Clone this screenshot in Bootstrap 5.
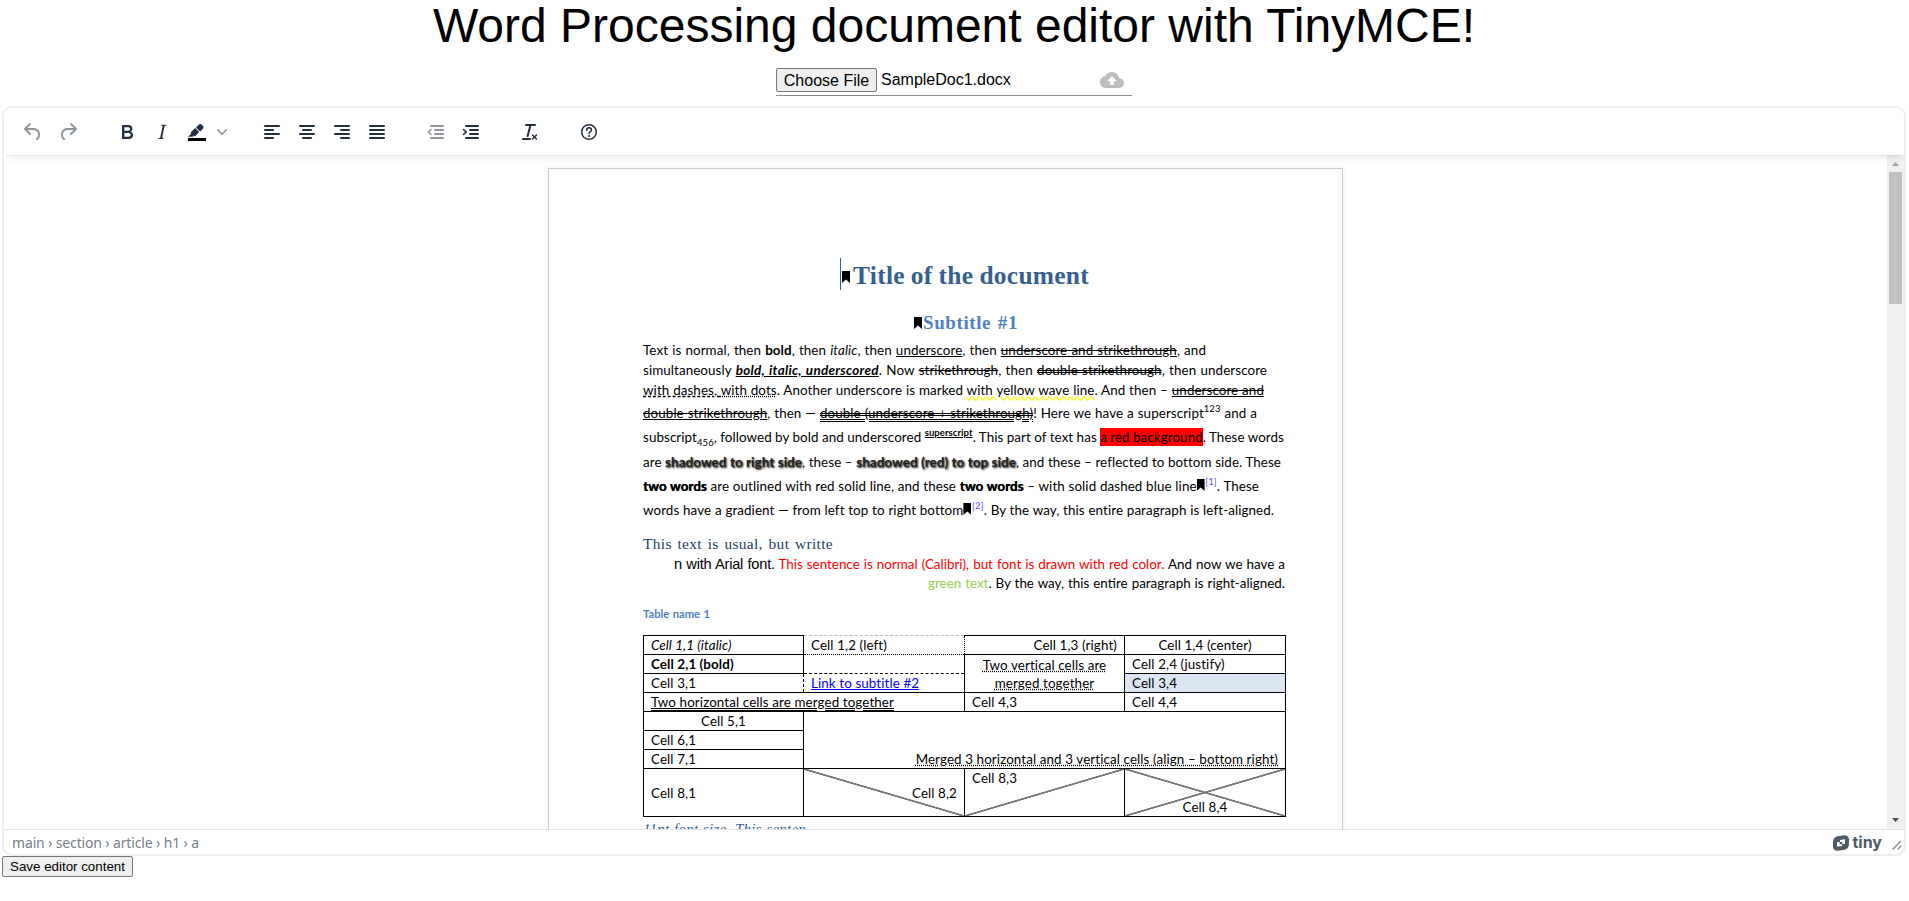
<!DOCTYPE html>
<html lang="en">
<head>
<meta charset="utf-8">
<title>Word Processing document editor with TinyMCE!</title>
<link href="https://cdn.jsdelivr.net/npm/bootstrap@5.3.0/dist/css/bootstrap.min.css" rel="stylesheet">
<style>
body{font-family:"Liberation Sans",Arial,sans-serif;color:#000;background:#fff;height:901px;overflow:hidden;padding:0 3px 0 2px}
.app-title{font-size:48px;line-height:51px;height:64px;color:#000}
.file-row{width:356px;height:32px;border-bottom:1px solid #8c8c8c;font-size:16px}
.ua-btn{border:1px solid #767676;border-radius:2px;background:#efefef;color:#000;white-space:nowrap}
.choose{width:101px;height:24px;line-height:21px;padding:0;text-align:center}
.editor{height:750px;margin-top:10px;border:2px solid #eee;border-radius:10px;overflow:hidden}
.tools{height:47px;padding-left:11px;position:relative;z-index:1;background:#fff;box-shadow:0 2px 2px -2px rgba(34,47,62,.15),0 8px 8px -4px rgba(34,47,62,.08)}
.tools svg,.tools span{flex:none}
.ico{width:24px;height:24px;fill:#222f3e;color:#222f3e}
.off{opacity:.5}
.view{height:674px;overflow:hidden}
.sheet{width:795px;height:800px;margin:13px 0 0 544px;border:1px solid #ccc;box-shadow:0 0 5px rgba(0,0,0,.08);padding:89px 0 0 94px;color:#000;font-family:Lato,sans-serif;font-size:13.4px;letter-spacing:0}
.ln{display:block;white-space:nowrap;text-align:justify;text-align-last:justify;word-spacing:-1.5px}
.para .ln{letter-spacing:.08px;word-spacing:-2px}
.ser{font-family:"Liberation Serif",Cambria,serif;letter-spacing:0}
.h-one{height:32px;margin-left:197px;border-left:1px solid #365f91;padding-left:1px;width:300px;line-height:34px;font-size:25.4px;color:#365f91;font-weight:700}
.h-two{height:24px;margin:20px 0 0 271px;line-height:26px;font-size:19px;color:#4f81bd;font-weight:700}
.bm{display:inline-block;width:8px;height:12px;background:#000;clip-path:polygon(0 0,100% 0,100% 100%,50% 70%,0 100%)}
.u{text-decoration:underline}.s{text-decoration:line-through}.us{text-decoration:underline line-through}
.ds{text-decoration:line-through double}.dot{text-decoration:underline dotted}.dash{text-decoration:underline dashed}
.wave{text-decoration:underline wavy #ff0}
.dus{text-decoration:underline line-through double}
.shade{font-weight:700;color:#222;text-shadow:1px 1px 2px #000}
.heavy{font-weight:700;text-shadow:.4px 0 0 #000}
.sup,.sub{font-size:9.5px;position:relative;top:-6px;line-height:0}.sub{top:4px}
.cells{width:642px;height:182px;border-collapse:collapse;table-layout:fixed;margin-top:12px;line-height:18px;letter-spacing:.1px}
.cells td{border:1px solid #000;padding:0 7px;height:19px;white-space:nowrap;vertical-align:middle}
.cells .tall{height:48px}
.dg{background-repeat:no-repeat;background-size:100% 100%}
.bar{width:17px;background:#f0f0f0}
.thumb{width:13px;height:132px;background:#c1c1c1}
.state{height:25px;border-top:1px solid #e3e3e3;font-family:"Noto Sans",sans-serif;font-size:14px;color:rgba(34,47,62,.65);padding:1px 2px 0 8px}
.crumbs{letter-spacing:-.15px;word-spacing:0}
.brandword{font-family:Inter,sans-serif;font-weight:700;font-size:16px;color:#4e5a66}
.save{width:131px;height:21px;font-size:13.33px;line-height:19px;padding:0}
</style>
</head>
<body>
<h1 class="app-title fw-normal text-center text-nowrap m-0">Word Processing document editor with TinyMCE!</h1>
<div class="file-row mx-auto d-flex align-items-start pt-1">
<button class="ua-btn choose">Choose File</button><span style="margin-left:4px;line-height:24px">SampleDoc1.docx</span>
<svg class="ms-auto me-2" width="24" height="24" viewBox="0 0 24 24" fill="#bdbdbd"><path d="M19.35 10.04A7.49 7.49 0 0 0 12 4C9.11 4 6.6 5.64 5.35 8.04A5.994 5.994 0 0 0 0 14c0 3.31 2.69 6 6 6h13c2.76 0 5-2.24 5-5 0-2.64-2.05-4.78-4.65-4.96zM14 13v4h-4v-4H7l5-5 5 5h-3z"/></svg>
</div>
<div class="editor">
<div class="tools d-flex align-items-center">
<svg class="ico off" style="margin-left:6px" viewBox="0 0 24 24"><path d="M6.4 8H12c3.7 0 6.2 2 6.8 5.1.6 2.7-.4 5.6-2.3 6.8a1 1 0 0 1-1-1.8c1.1-.6 1.8-2.7 1.4-4.6-.5-2.1-2.1-3.5-4.9-3.5H6.4l3.3 3.3a1 1 0 1 1-1.4 1.4l-5-5a1 1 0 0 1 0-1.4l5-5a1 1 0 0 1 1.4 1.4L6.4 8Z"/></svg>
<svg class="ico off" style="margin-left:11px" viewBox="0 0 24 24"><path transform="matrix(-1 0 0 1 24 0)" d="M6.4 8H12c3.7 0 6.2 2 6.8 5.1.6 2.7-.4 5.6-2.3 6.8a1 1 0 0 1-1-1.8c1.1-.6 1.8-2.7 1.4-4.6-.5-2.1-2.1-3.5-4.9-3.5H6.4l3.3 3.3a1 1 0 1 1-1.4 1.4l-5-5a1 1 0 0 1 0-1.4l5-5a1 1 0 0 1 1.4 1.4L6.4 8Z"/></svg>
<svg class="ico" style="margin-left:35px" viewBox="0 0 24 24"><path d="M7.8 19c-.3 0-.5 0-.6-.2l-.2-.5V5.7c0-.2 0-.4.2-.5l.6-.2h5c1.5 0 2.7.3 3.5 1 .7.6 1.1 1.4 1.1 2.5a3 3 0 0 1-.6 1.9c-.4.6-1 1-1.6 1.2.4.1.9.3 1.3.6s.8.7 1 1.2c.4.4.5 1 .5 1.6 0 1.3-.4 2.3-1.3 3-.8.7-2.1 1-3.8 1H7.8Zm5-8.3c.6 0 1.2-.1 1.6-.5.4-.3.6-.7.6-1.3 0-1.1-.8-1.7-2.3-1.7H9.3v3.5h3.4Zm.5 6c.7 0 1.3-.1 1.7-.4.4-.4.6-.9.6-1.5s-.2-1-.7-1.4c-.4-.3-1-.4-2-.4H9.4v3.8h4Z"/></svg>
<svg class="ico" style="margin-left:11px" viewBox="0 0 24 24"><path d="m16.7 4.7-.1.9h-.3c-.6 0-1 0-1.4.3-.3.3-.4.6-.5 1.1l-2.1 9.8v.6c0 .5.4.8 1.4.8h.2l-.2.8H8l.2-.8h.2c1.1 0 1.8-.5 2-1.5l2-9.8.1-.5c0-.6-.4-.8-1.4-.8h-.3l.2-.9h5.8Z"/></svg>
<svg class="ico" style="margin-left:11px" viewBox="0 0 24 24"><path fill="#000" d="M3 18h18v3H3z"/><path d="M7.7 16.7H3l3.3-3.3-.7-.8L10.2 8l4 4.1-4 4.2c-.2.2-.6.2-.8 0l-.6-.7-1.1 1.1zm5-7.5L11 7.4l3-2.9a2 2 0 0 1 2.6 0L18 6c.7.7.7 2 0 2.7l-2.9 2.9-1.8-1.8-.5-.6"/></svg>
<svg style="margin-left:8px;opacity:.5" width="10" height="10" viewBox="0 0 10 10" fill="#222f3e"><path d="M8.7 2.2c.3-.3.8-.3 1 0 .4.4.4.9 0 1.2L5.700 7.800c-.3.3-.9.3-1.200 0L.2 3.400a.8.8 0 0 1 0-1.200c.3-.3.8-.3 1.100 0L5 6l3.700-3.800Z"/></svg>
<svg class="ico" style="margin-left:33px" viewBox="0 0 24 24" stroke="currentColor" stroke-width="2" stroke-linecap="round"><path d="M5 6h14M5 10h8M5 14h14M5 18h8"/></svg>
<svg class="ico" style="margin-left:11px" viewBox="0 0 24 24" stroke="currentColor" stroke-width="2" stroke-linecap="round"><path d="M5 6h14M8 10h8M5 14h14M8 18h8"/></svg>
<svg class="ico" style="margin-left:11px" viewBox="0 0 24 24" stroke="currentColor" stroke-width="2" stroke-linecap="round"><path d="M5 6h14M11 10h8M5 14h14M11 18h8"/></svg>
<svg class="ico" style="margin-left:11px" viewBox="0 0 24 24" stroke="currentColor" stroke-width="2" stroke-linecap="round"><path d="M5 6h14M5 10h14M5 14h14M5 18h14"/></svg>
<svg class="ico off" style="margin-left:35px" viewBox="0 0 24 24" fill="none" stroke="currentColor" stroke-width="2" stroke-linecap="round"><path d="M7 6h12M11 10h8M11 14h8M7 18h12"/><path fill="none" stroke-width="1.6" d="M7 9.600 4.400 12 7 14.400"/></svg>
<svg class="ico" style="margin-left:11px" viewBox="0 0 24 24" stroke="currentColor" stroke-width="2" stroke-linecap="round"><path d="M7 6h12M11 10h8M11 14h8M7 18h12"/><path fill="none" stroke-width="1.6" d="M4.600 9.600 7.200 12l-2.600 2.400"/></svg>
<svg class="ico" style="margin-left:35px" viewBox="0 0 24 24"><path d="M13.2 6a1 1 0 0 1 0 .2l-2.6 10a1 1 0 0 1-1 .8h-.2a.8.8 0 0 1-.8-1l2.6-10H8a1 1 0 1 1 0-2h9a1 1 0 0 1 0 2h-3.8ZM5 18h7a1 1 0 0 1 0 2H5a1 1 0 0 1 0-2Zm13 1.5L16.5 18 15 19.5a.7.7 0 0 1-1-1l1.5-1.5-1.5-1.5a.7.7 0 0 1 1-1l1.5 1.5 1.5-1.5a.7.7 0 0 1 1 1L17.5 17l1.5 1.5a.7.7 0 0 1-1 1Z"/></svg>
<svg class="ico" style="margin-left:35px" viewBox="0 0 24 24"><circle cx="12" cy="12" r="7.3" fill="none" stroke="currentColor" stroke-width="1.5"/><path d="M9.7 10.2c0-1.5 1-2.4 2.4-2.4s2.3.9 2.3 2.1c0 1.700-2.300 1.800-2.300 3.500" fill="none" stroke="currentColor" stroke-width="1.5" stroke-linecap="round"/><circle cx="12.1" cy="15.9" r="1"/></svg>
</div>
<div class="view d-flex">
<div class="flex-grow-1 overflow-hidden">
<div class="sheet">
<div class="h-one ser d-flex"><i class="bm flex-shrink-0" style="margin-top:13px;margin-right:3px"></i><span class="ln" style="width:236px;letter-spacing:.3px">Title of the document</span></div>
<div class="h-two ser d-flex"><i class="bm flex-shrink-0" style="margin-top:7px;margin-right:1px"></i><span class="ln" style="width:95px;letter-spacing:.6px">Subtitle #1</span></div>
<div class="para" style="margin-top:6px">
<span class="ln" style="width:563px;height:20px;line-height:20px">Text is normal, then <b>bold</b>, then <i>italic</i>, then <span class="u">underscore</span>, then <span class="us">underscore and strikethrough</span>, and</span>
<span class="ln" style="width:624px;height:20px;line-height:20px">simultaneously <b class="u fst-italic" style="letter-spacing:.3px">bold, italic, underscored</b>. Now <span class="s">strikethrough</span>, then <span class="ds">double strikethrough</span>, then underscore</span>
<span class="ln" style="width:621px;height:20px;line-height:20px"><span class="dash">with dashes, </span><span class="dot">with dots</span>. Another underscore is marked <span class="wave">with yellow wave line</span>. And then – <span class="us">underscore and</span></span>
<span class="ln" style="width:614px;height:26px;line-height:26px"><span class="us">double strikethrough</span>, then — <span class="dus">double (underscore + strikethrough)</span>! Here we have a superscript<span class="sup">123</span> and a</span>
<span class="ln" style="width:641px;height:23px;line-height:23px">subscript<span class="sub">456</span>, followed by bold and underscored <b class="sup u">superscript</b>. This part of text has <span style="background:red;padding:1px 0">a red background</span>. These words</span>
<span class="ln" style="width:638px;height:26px;line-height:26px">are <span class="shade">shadowed to right side</span>, these – <span class="shade">shadowed (red) to top side</span>, and these – reflected to bottom side. These</span>
<span class="ln" style="width:616px;height:23px;line-height:23px"><span class="heavy">two words</span> are outlined with red solid line, and these <span class="heavy">two words</span> – with solid dashed blue line<i class="bm"></i><span class="sup" style="color:#55f">&#8202;[1]</span>. These</span>
<span class="ln" style="width:631px;height:25px;line-height:25px">words have a gradient — from left top to right bottom<i class="bm"></i><span class="sup" style="color:#55f">&#8202;[2]</span>. By the way, this entire paragraph is left-aligned.</span>
</div>
<span class="ln ser" style="width:190px;margin-top:11px;height:20px;line-height:20px;font-size:15.4px;letter-spacing:.35px;color:#243f60">This text is usual, but writte</span>
<span class="ln" style="width:611px;margin-left:31px;height:20px;line-height:20px"><span style="font:14.67px 'Liberation Sans';letter-spacing:-.25px">n with Arial font.</span> <span style="color:red">This sentence is normal (Calibri), but font is drawn with red color.</span> And now we have a</span>
<span class="ln" style="width:357px;margin-left:285px;height:19px;line-height:19px"><span style="color:#92d050">green text</span>. By the way, this entire paragraph is right-aligned.</span>
<span class="ln fw-bold" style="width:67px;margin-top:12px;line-height:18px;font-size:11.2px;color:#4f81bd">Table name 1</span>
<table class="cells">
<colgroup><col style="width:160px"><col style="width:161px"><col style="width:160px"><col style="width:161px"></colgroup>
<tr><td class="fst-italic">Cell 1,1 (italic)</td><td style="border-top:1px dashed #bbb;border-left:1px dotted #000;border-bottom:1px dotted #000;border-right:1px dotted #000">Cell 1,2 (left)</td><td class="text-end" style="border-left-style:dotted">Cell 1,3 (right)</td><td class="text-center">Cell 1,4 (center)</td></tr>
<tr><td class="fw-bold">Cell 2,1 (bold)</td><td style="border-top:1px dotted #000;border-bottom:1px dashed #000"></td><td rowspan="2" class="text-center dot">Two vertical cells are<br>merged together</td><td>Cell 2,4 (justify)</td></tr>
<tr><td style="border-right:1px dashed #000">Cell 3,1</td><td style="border-top:1px dashed #000;border-left:1px dashed #000"><span class="u" style="color:#00f">Link to subtitle #2</span></td><td style="background:#dbe5f1">Cell 3,4</td></tr>
<tr><td colspan="2"><span style="text-decoration:underline double">Two horizontal cells are merged together</span></td><td>Cell 4,3</td><td>Cell 4,4</td></tr>
<tr><td class="text-center">Cell 5,1</td><td colspan="3" rowspan="3" class="text-end align-bottom"><span class="dot">Merged 3 horizontal and 3 vertical cells (align – bottom right)</span></td></tr>
<tr><td>Cell 6,1</td></tr>
<tr><td>Cell 7,1</td></tr>
<tr><td class="tall">Cell 8,1</td>
<td class="text-end dg" style="background-image:linear-gradient(to top right,transparent calc(50% - 1.2px),#777 calc(50% - .6px),#777 calc(50% + .6px),transparent calc(50% + 1.2px))">Cell 8,2</td>
<td class="align-top dg" style="background-image:linear-gradient(to bottom right,transparent calc(50% - 1.2px),#777 calc(50% - .6px),#777 calc(50% + .6px),transparent calc(50% + 1.2px))">Cell 8,3</td>
<td class="text-center align-bottom dg" style="background-image:linear-gradient(to top right,transparent calc(50% - 1.2px),#777 calc(50% - .6px),#777 calc(50% + .6px),transparent calc(50% + 1.2px)),linear-gradient(to bottom right,transparent calc(50% - 1.2px),#777 calc(50% - .6px),#777 calc(50% + .6px),transparent calc(50% + 1.2px))">Cell 8,4</td></tr>
</table>
<span class="ln ser fst-italic" style="width:163px;margin-top:2px;line-height:20px;font-size:15px;letter-spacing:.2px;color:#365f91">11pt font size. This senten</span>
</div>
</div>
<div class="bar d-flex flex-column align-items-center">
<svg width="17" height="17" viewBox="0 0 17 17"><path fill="#a3a3a3" d="M5 11h7L8.500 7z"/></svg>
<div class="thumb"></div>
<svg class="mt-auto" width="17" height="17" viewBox="0 0 17 17"><path fill="#505050" d="M5 6h7L8.500 10z"/></svg>
</div>
</div>
<div class="state d-flex align-items-center">
<span class="ln crumbs" style="width:184px">main › section › article › h1 › a</span>
<svg class="ms-auto" width="16" height="16" viewBox="0 0 16 16"><path fill="#4e5a66" fill-rule="evenodd" d="M4.500 1.200 11 .2C14 0 16 1.700 16 4.500V9c0 3-1.500 5-4.500 5.700L5 15.800C2 16 0 14.300 0 11.500V7c0-3 1.500-5.200 4.500-5.800ZM12 4.200 7 5v2H5L4 7.300v4.500l5-.8V9h2l1-.2ZM6.700 7h2.600v2.200H6.700Z"/></svg>
<span class="brandword" style="margin:0 10px 2px 3px">tiny</span>
<svg width="10" height="10" viewBox="0 0 10 10" stroke="#7b838b" stroke-width="1.200" stroke-linecap="round" class="mt-1"><path d="M1 9 8.500 1.500M6 9l3-3"/></svg>
</div>
</div>
<button class="ua-btn save d-block">Save editor content</button>
<script src="https://cdn.jsdelivr.net/npm/bootstrap@5.3.0/dist/js/bootstrap.bundle.min.js"></script>
</body>
</html>
